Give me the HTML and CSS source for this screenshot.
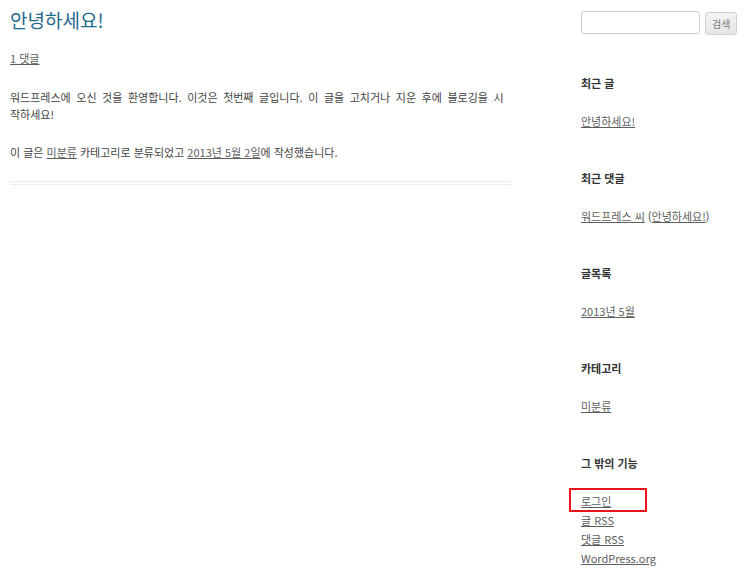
FILE: index.html
```html
<!DOCTYPE html>
<html lang="ko">
<head>
  <meta charset="UTF-8">
  <meta name="viewport" content="width=device-width, initial-scale=1.0">
  <title>안녕하세요!</title>
  <link rel="stylesheet" href="styles.css">
</head>
<body>

  <div class="site">
    <div class="content">
      <article class="post">
        <h1 class="entry-title">안녕하세요!</h1>
        <div class="comments-link"><a href="#">1 댓글</a></div>
        <div class="entry-content">
          <p>워드프레스에 오신 것을 환영합니다. 이것은 첫번째 글입니다. 이 글을 고치거나 지운 후에 블로깅을 시작하세요!</p>
        </div>
        <footer class="entry-meta">
          이 글은 <a href="#">미분류</a> 카테고리로 분류되었고 <a href="#">2013년 5월 2일</a>에 작성했습니다.
        </footer>
      </article>
    </div>

    <aside class="sidebar">
      <form class="searchform">
        <input type="text" class="search-input">
        <button type="button" class="search-btn">검색</button>
      </form>

      <div class="widget">
        <h3 class="widget-title">최근 글</h3>
        <ul>
          <li><a href="#">안녕하세요!</a></li>
        </ul>
      </div>

      <div class="widget">
        <h3 class="widget-title">최근 댓글</h3>
        <ul>
          <li><a href="#">워드프레스 씨</a> (<a href="#">안녕하세요!</a>)</li>
        </ul>
      </div>

      <div class="widget">
        <h3 class="widget-title">글목록</h3>
        <ul>
          <li><a href="#">2013년 5월</a></li>
        </ul>
      </div>

      <div class="widget">
        <h3 class="widget-title">카테고리</h3>
        <ul>
          <li><a href="#">미분류</a></li>
        </ul>
      </div>

      <div class="widget">
        <h3 class="widget-title">그 밖의 기능</h3>
        <ul>
          <li class="marked"><a href="#">로그인</a><span class="mark-box"></span></li>
          <li><a href="#">글 RSS</a></li>
          <li><a href="#">댓글 RSS</a></li>
          <li><a href="#">WordPress.org</a></li>
        </ul>
      </div>
    </aside>
  </div>

</body>
</html>
```

FILE: styles.css
```css
body {
  margin: 0;
  background-color: #fff;
  color: #444;
  font-family: 'Noto Sans CJK KR', 'Liberation Sans', sans-serif;
  font-size: 11px;
  line-height: 17px;
}
a {
  color: #5e5e5e;
}
.site {
  display: flex;
  padding: 8px 10px;
}
.content {
  width: 504px;
}
.post {
  border-bottom: 4px double #ededed;
  padding-bottom: 20px;
}
.entry-title {
  margin: 0;
  font-size: 19px;
  line-height: 24px;
  font-weight: normal;
  color: #1f6a8e;
}
.comments-link {
  margin-top: 18px;
}
.entry-content p {
  margin: 22px 0 0;
  word-spacing: 2.5px;
}
.entry-meta {
  margin-top: 21px;
}
.sidebar {
  width: 160px;
  margin-left: 70px;
}
.searchform {
  display: flex;
  gap: 5px;
  margin: 3px 0 0;
}
.search-input {
  width: 119px;
  height: 23px;
  box-sizing: border-box;
  border: 1px solid #ccc;
  border-radius: 3px;
  padding: 0 4px;
}
.search-btn {
  height: 23px;
  margin-top: 1px;
  padding: 0 6px;
  border: 1px solid #d2d2d2;
  border-radius: 3px;
  background: linear-gradient(#f4f4f4, #e6e6e6);
  color: #7c7c7c;
  font-family: inherit;
  font-size: 10px;
  white-space: nowrap;
}
.widget {
  margin-top: 40px;
}
.widget + .widget {
  margin-top: 39px;
}
.widget-title {
  margin: 0;
  font-size: 11px;
  font-weight: bold;
  color: #333;
}
.widget ul {
  list-style: none;
  margin: 20px 0 0;
  padding: 0;
}
.widget li {
  line-height: 19px;
}
.marked {
  position: relative;
}
.mark-box {
  position: absolute;
  left: -12px;
  top: -4px;
  width: 74px;
  height: 20px;
  border: 2px solid #e8151b;
}
```
